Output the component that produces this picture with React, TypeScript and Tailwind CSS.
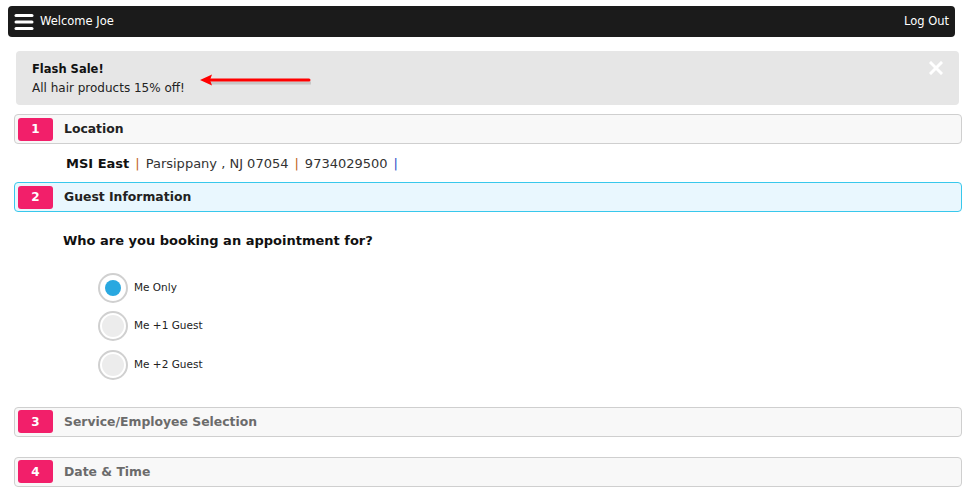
import { useState } from 'react';

const FONT = "font-['DejaVu_Sans',sans-serif]";

function StepHeader({ n, title, active, muted }: { n: number; title: string; active?: boolean; muted?: boolean }) {
  return (
    <div
      className={`flex items-center h-[30px] rounded-[4px] border pl-[3px] ${
        active ? 'bg-[#e9f7fe] border-[#38c8ec]' : 'bg-[#f8f8f8] border-[#cfcfcf]'
      }`}
    >
      <span className="flex items-center justify-center w-[35px] h-[23px] rounded-[3px] bg-[#f21f6a] text-white text-[12px] font-bold">
        {n}
      </span>
      <span className={`ml-[11px] pt-[1px] text-[12.4px] font-bold ${muted ? 'text-[#6b6b6b]' : 'text-[#222]'}`}>{title}</span>
    </div>
  );
}

function Radio({ label, checked, onClick }: { label: string; checked: boolean; onClick: () => void }) {
  return (
    <button onClick={onClick} className="flex items-center h-[30px] text-left">
      <span className="flex items-center justify-center w-[30px] h-[30px] rounded-full border-2 border-[#d0d0d0] bg-white">
        <span className={`rounded-full ${checked ? 'w-[16px] h-[16px] bg-[#29a8e0]' : 'w-[22px] h-[22px] bg-[#ececec]'}`} />
      </span>
      <span className="ml-[6px] text-[10.5px] text-[#222]">{label}</span>
    </button>
  );
}

export default function App() {
  const [guest, setGuest] = useState(0);
  const [showSale, setShowSale] = useState(true);

  return (
    <div className={`${FONT} w-[972px] h-[504px] bg-white overflow-hidden pt-[6px]`}>
      {/* top bar */}
      <div className="mx-[8px] w-[947px] h-[31px] bg-[#1b1b1b] rounded-[4px] flex items-center px-[6px]">
        <svg width="20" height="20" viewBox="0 0 20 20" className="shrink-0">
          <rect x="0.5" y="2" width="19" height="3" rx="1.5" fill="#fff" />
          <rect x="0.5" y="8.5" width="19" height="3" rx="1.5" fill="#fff" />
          <rect x="0.5" y="15" width="19" height="3" rx="1.5" fill="#fff" />
        </svg>
        <span className="ml-[6px] text-white text-[11.5px]">Welcome Joe</span>
        <span className="ml-auto text-white text-[11.5px]">Log Out</span>
      </div>

      {/* flash sale */}
      {showSale && (
        <div className="mt-[14px] mx-[16px] w-[943px] h-[54px] bg-[#e6e6e6] rounded-[4px] flex items-start pl-[16px] pr-[16px] pt-[9px]">
          <div className="leading-[19px]">
            <div className="text-[11.5px] font-bold text-[#111]">Flash Sale!</div>
            <div className="text-[12px] text-[#222]">All hair products 15% off!</div>
          </div>
          <svg width="116" height="14" viewBox="0 0 116 14" className="ml-[14px] mt-[14px]">
            <line x1="10" y1="7" x2="110" y2="7" stroke="#999" strokeWidth="3" opacity="0.4" transform="translate(2,2)" />
            <line x1="10" y1="6" x2="110" y2="6" stroke="#f00" strokeWidth="3" strokeLinecap="round" />
            <polygon points="1,6 13,0.5 11,6 13,11.5" fill="#f00" />
          </svg>
          <button onClick={() => setShowSale(false)} className="ml-auto mt-[1px]">
            <svg width="14" height="14" viewBox="0 0 14 14">
              <path d="M2 2 L12 12 M12 2 L2 12" stroke="#fff" strokeWidth="3" strokeLinecap="square" />
            </svg>
          </button>
        </div>
      )}

      <div className="mx-[14px] w-[948px] mt-[9px]">
        <StepHeader n={1} title="Location" />

        <div className="mt-[9px] ml-[52px] text-[13px] text-[#333] h-[21px] flex items-center">
          <span className="font-bold text-[#111]">MSI East</span>
          <span className="mx-[6px] text-[#c0621a]">|</span>
          <span>Parsippany , NJ 07054</span>
          <span className="mx-[6px] text-[#c0621a]">|</span>
          <span>9734029500</span>
          <span className="mx-[6px] text-[#2a4fc8]">|</span>
        </div>

        <div className="mt-[8px]">
          <StepHeader n={2} title="Guest Information" active />
        </div>

        <div className="ml-[49px] mt-[19px] text-[13px] font-bold text-[#111]">Who are you booking an appointment for?</div>

        <div className="ml-[84px] mt-[22px] flex flex-col gap-[8.5px]">
          {['Me Only', 'Me +1 Guest', 'Me +2 Guest'].map((l, i) => (
            <Radio key={l} label={l} checked={guest === i} onClick={() => setGuest(i)} />
          ))}
        </div>

        <div className="mt-[27px]">
          <StepHeader n={3} title="Service/Employee Selection" muted />
        </div>
        <div className="mt-[20px]">
          <StepHeader n={4} title="Date & Time" muted />
        </div>
      </div>
    </div>
  );
}
